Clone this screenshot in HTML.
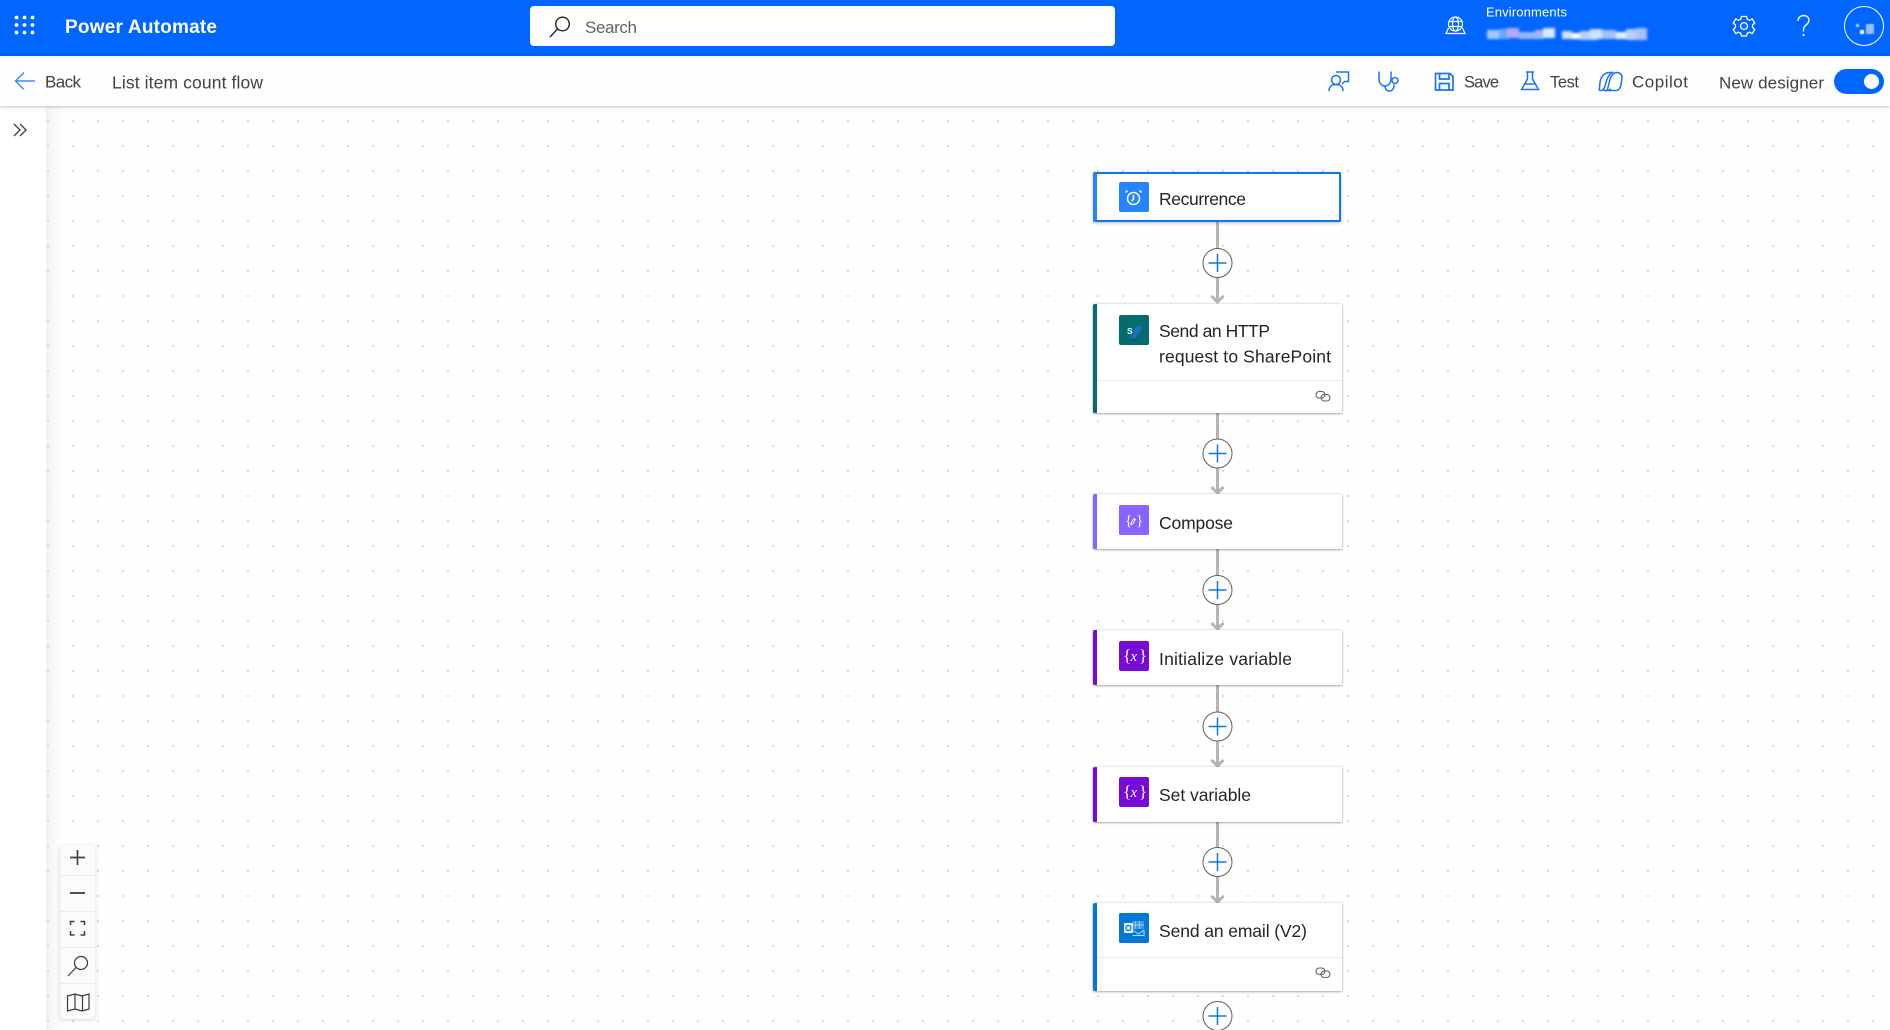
<!DOCTYPE html>
<html lang="en">
<head>
<meta charset="utf-8">
<title>List item count flow | Power Automate</title>
<style>
html,body{margin:0;padding:0;width:1890px;height:1030px;overflow:hidden;background:#fff}
body{position:relative;font-family:"Liberation Sans",sans-serif}
.abs{position:absolute}
#canvas{left:46px;top:106px;width:1844px;height:924px;background-color:#fefefe;
 background-image:radial-gradient(circle at 1px 1px,#c4c4c4 .7px,transparent 1px),linear-gradient(90deg,#f1f1f1,#fafafa 10px,#fefefe 18px);
 background-size:25px 25px,100% 100%;background-position:1px 14px,0 0;background-repeat:repeat,no-repeat}
#panel{left:0;top:106px;width:46px;height:924px;background:#fff}
#top{left:0;top:0;width:1890px;height:56px;background:#0066ff}
#search{left:530px;top:6px;width:585px;height:40px;background:#fff;border-radius:4px}
#bar{left:0;top:56px;width:1890px;height:50px;background:#fefefe;box-shadow:0 1px 3px rgba(0,0,0,.25)}
.card{position:absolute;left:1093px;width:249px;background:#fff;box-sizing:border-box;border-left:4px solid;border-radius:2px 1px 1px 2px;box-shadow:0 0 2px rgba(0,0,0,.2),0 1px 2px rgba(0,0,0,.28)}
.card i{position:absolute;left:0;right:0;height:1px;background:#ebebeb}
#rec{left:1093px;top:172px;width:248px;height:50px;box-sizing:border-box;border:2px solid #0f78e8;border-left:4px solid #2684ff;box-shadow:0 1px 3px rgba(0,0,0,.25);background:#fff;position:absolute;border-radius:2px}
.ic{position:absolute;left:1119px;width:30px;height:30px;border-radius:2px}
#zoom{left:60px;top:845px;width:35px;height:174px;background:#fbfbfb;border-radius:3px;box-shadow:0 1px 4px rgba(0,0,0,.16)}
#zoom i{position:absolute;left:0;right:0;height:1px;background:#ececec}
#toggle{left:1834px;top:69px;width:50px;height:25px;border-radius:13px;background:#0066ff}
#toggle b{position:absolute;left:30px;top:5px;width:15px;height:15px;border-radius:50%;background:#fff}
#blur{left:1487px;top:26px;width:160px;height:16px;filter:blur(1.4px)}
#blur span{position:absolute}
#ava{left:1856px;top:22px;width:18px;height:12px;filter:blur(.5px)}
#ava span{position:absolute;background:#b9d2ff}
svg#o{position:absolute;left:0;top:0;width:1890px;height:1030px}
text{font-family:"Liberation Sans",sans-serif}
.c{font-size:17.5px;fill:#242424}
.b{font-size:17px;fill:#424242}
.s{font-size:16.5px;fill:#424242}
</style>
</head>
<body>
<div id="canvas" class="abs"></div>
<div id="panel" class="abs"></div>
<div id="top" class="abs"></div>
<div id="search" class="abs"></div>
<div id="bar" class="abs"></div>

<div id="blur" class="abs">
<span style="left:0;top:4px;width:12px;height:9px;background:#a3c6ff"></span>
<span style="left:12px;top:3px;width:10px;height:10px;background:#6fa4ff"></span>
<span style="left:20px;top:2px;width:12px;height:10px;background:#b5a8f2"></span>
<span style="left:32px;top:6px;width:16px;height:7px;background:#8fb8ff"></span>
<span style="left:48px;top:4px;width:8px;height:9px;background:#a9b4f8"></span>
<span style="left:56px;top:2px;width:12px;height:10px;background:#dbe8ff"></span>
<span style="left:75px;top:5px;width:10px;height:8px;background:#cfe0ff"></span>
<span style="left:85px;top:7px;width:8px;height:6px;background:#ffffff"></span>
<span style="left:93px;top:5px;width:18px;height:9px;background:#b6d0ff"></span>
<span style="left:103px;top:3px;width:12px;height:10px;background:#cfe0ff"></span>
<span style="left:115px;top:4px;width:14px;height:9px;background:#9fc2ff"></span>
<span style="left:129px;top:6px;width:10px;height:7px;background:#e6efff"></span>
<span style="left:139px;top:3px;width:10px;height:11px;background:#b8cffd"></span>
<span style="left:149px;top:2px;width:11px;height:12px;background:#a8bffa"></span>
</div>
<div id="ava" class="abs">
<span style="left:0;top:2px;width:3px;height:3px"></span>
<span style="left:4px;top:8px;width:4px;height:4px;background:#fff"></span>
<span style="left:10px;top:2px;width:8px;height:10px;background:#99bcff"></span>
</div>
<div id="toggle" class="abs"><b></b></div>

<svg class="abs" style="left:0;top:0" width="1890" height="1030">
 <g stroke="#b4b4b4" stroke-width="3" fill="none">
  <path d="M1217.500 222V302M1211.500 296l6 6 6-6"/>
  <path d="M1217.500 413V493M1211.500 487l6 6 6-6"/>
  <path d="M1217.500 549V629M1211.500 623l6 6 6-6"/>
  <path d="M1217.500 685V766M1211.500 760l6 6 6-6"/>
  <path d="M1217.500 821V902M1211.500 896l6 6 6-6"/>
 </g>
</svg>

<div id="rec"></div>
<div class="card" style="top:304px;height:109px;border-left-color:#036c70"><i style="top:76px"></i></div>
<div class="card" style="top:494px;height:55px;border-left-color:#8764ff"></div>
<div class="card" style="top:630px;height:55px;border-left-color:#770bd6"></div>
<div class="card" style="top:767px;height:55px;border-left-color:#770bd6"></div>
<div class="card" style="top:903px;height:88px;border-left-color:#0078d4"><i style="top:54px"></i></div>

<div class="ic" style="top:182px;background:#2684ff"></div>
<div class="ic" style="top:315px;background:#036c70"></div>
<div class="ic" style="top:505px;background:#8764ff"></div>
<div class="ic" style="top:641px;background:#770bd6"></div>
<div class="ic" style="top:777px;background:#770bd6"></div>
<div class="ic" style="top:913px;background:#0078d4"></div>

<div id="zoom" class="abs"><i style="top:30px"></i><i style="top:66px"></i><i style="top:102px"></i><i style="top:138px"></i></div>

<svg id="o" viewBox="0 0 1890 1030">
 <g fill="#fff">
  <circle cx="16.5" cy="17.5" r="1.9"/><circle cx="24.5" cy="17.5" r="1.9"/><circle cx="32.5" cy="17.5" r="1.9"/>
  <circle cx="16.5" cy="25" r="1.9"/><circle cx="24.5" cy="25" r="1.9"/><circle cx="32.5" cy="25" r="1.9"/>
  <circle cx="16.5" cy="32.5" r="1.9"/><circle cx="24.5" cy="32.5" r="1.9"/><circle cx="32.5" cy="32.5" r="1.9"/>
 </g>
 <text x="65" y="33" font-size="19" font-weight="700" fill="#fff" textLength="152">Power Automate</text>
 <g fill="none" stroke="#242424" stroke-width="1.4"><circle cx="562.5" cy="24" r="6.8"/><path d="M557.5 29L550 37"/></g>
 <text x="585" y="33" font-size="17" fill="#616161" textLength="52">Search</text>

 <g fill="none" stroke="#fff" stroke-width="1.2">
  <circle cx="1455.500" cy="24" r="7"/><ellipse cx="1455.500" cy="24" rx="3" ry="7"/><path d="M1449 21.500h13M1449 26.500h13M1448.500 28l-2.500 5.500h19l-2.500-5.500"/>
 </g>
 <text x="1486" y="16.500" font-size="13" fill="#fff" textLength="81">Environments</text>
 <g fill="none" stroke="#fff" stroke-width="1.3">
  <circle cx="1744" cy="26" r="3.400"/>
  <path d="M1741.500 16.500h5l.8 2.800 2.300 1 2.600-1.400 2.500 4.100-2.100 2 0 2.500 2.100 2-2.500 4.100-2.600-1.400-2.300 1-.8 2.800h-5l-.8-2.800-2.300-1-2.600 1.400-2.500-4.100 2.100-2 0-2.500-2.100-2 2.500-4.100 2.600 1.400 2.300-1z"/>
 </g>
 <g fill="none" stroke="#fff" stroke-width="1.4"><path d="M1798 21c0-7 11-7.500 11-.5 0 4-5.500 4.500-5.500 9v2"/></g>
 <circle cx="1803.500" cy="35" r="1.100" fill="#fff"/>
 <circle cx="1864" cy="26" r="19.500" fill="none" stroke="#fff" stroke-width="1"/>

 <path d="M35 81H16M24 72.500l-8.500 8.500 8.500 8.500" fill="none" stroke="#3f8cf5" stroke-width="1.500"/>
 <text x="45" y="87.500" class="b" textLength="36">Back</text>
 <text x="112" y="88.500" font-size="17.500" fill="#424242" textLength="151">List item count flow</text>
 <g fill="none" stroke="#1a73f0" stroke-width="1.500">
  <circle cx="1336" cy="80" r="4.500"/>
  <path d="M1329 91c0-4.500 3-6.500 7-6.500s7 2 7 6.500M1336 72h12.500v9.500h-4l-2.500 2.500"/>
  <path d="M1379 71.500v7c0 5 3 7.500 6 7.500s6-2.500 6-7.500v-7M1385 86c0 3.500 2 5 4.500 5s4.500-2 4.500-5.500v-1"/>
  <circle cx="1395" cy="80.500" r="3"/>
  <path d="M1435.500 73.500h14.500l3 3v13.500h-17.500zM1439.500 73.500v5.500h9.500v-5.500M1439.500 90v-6.500h9.500v6.500" stroke-width="1.700"/>
  <path d="M1526 72h8M1527.500 72v7l-6 10.500h17l-6-10.500v-7M1524.500 84h10"/>
  <path d="M1600 82c1-6 5-9.500 9.500-9.500h2.500c-3 2-5 6-6 10-1 4-2 8-5.500 8-1.500 0-1.500-1-1-2.500zM1607 90.500h9c3 0 4-2 5-5.500l1-7c.5-3-2-5.500-5-5.500-4 0-6 4-7 7l-2 8c-.5 2-1 3-2 3.500zM1603 90c3 1 6 .5 8-1"/>
 </g>
 <text x="1464" y="87.500" class="s" textLength="35">Save</text>
 <text x="1550" y="87.500" class="s" textLength="29">Test</text>
 <text x="1632" y="87.500" class="b" textLength="56">Copilot</text>
 <text x="1719" y="88.500" class="b" textLength="105">New designer</text>

 <path d="M14 124l6 6-6 6M20 124l6 6-6 6" fill="none" stroke="#424242" stroke-width="1.400"/>

 <g fill="#fff" stroke="#605e5c" stroke-width="1">
  <circle cx="1217.500" cy="263" r="14.500"/><circle cx="1217.500" cy="453.500" r="14.500"/><circle cx="1217.500" cy="590" r="14.500"/><circle cx="1217.500" cy="726.500" r="14.500"/><circle cx="1217.500" cy="862" r="14.500"/><circle cx="1217.500" cy="1016" r="14.500"/>
 </g>
 <g stroke="#0f78e0" stroke-width="1.500">
  <path d="M1208.500 263h18M1217.500 254v18"/><path d="M1208.500 453.500h18M1217.500 444.500v18"/><path d="M1208.500 590h18M1217.500 581v18"/><path d="M1208.500 726.500h18M1217.500 717.500v18"/><path d="M1208.500 862h18M1217.500 853v18"/><path d="M1208.500 1016h18M1217.500 1007v18"/>
 </g>

 <text x="1159" y="205" class="c" textLength="87">Recurrence</text>
 <text x="1159" y="337" class="c" textLength="111">Send an HTTP</text>
 <text x="1159" y="362.500" class="c" textLength="172">request to SharePoint</text>
 <text x="1159" y="529" class="c" textLength="74">Compose</text>
 <text x="1159" y="665" class="c" textLength="133">Initialize variable</text>
 <text x="1159" y="801" class="c" textLength="92">Set variable</text>
 <text x="1159" y="937" class="c" textLength="148">Send an email (V2)</text>

 <g fill="none" stroke="#fff" stroke-width="1.500">
  <circle cx="1133.500" cy="198.500" r="6"/><path d="M1133.500 195v4l-1.800 2.200M1127.500 190.500l-2 2M1139.500 190.500l2 2"/>
 </g>
 <text x="1127" y="334" font-size="8.500" font-weight="700" fill="#fff">S</text>
 <path d="M1137 326c3-1.500 5 1 4.500 3.500-.5 3-3 3.500-4.500 5.500-1 1.500-1.500 3.500-3.500 3.500s-2.500-2-1.500-3.500l2.500-2c.5-2.500 0-6 2.500-7z" fill="#1f6fc0"/>
 <path d="M1131 340h7" stroke="#0b3a52" stroke-width="1"/>
 <text x="1125" y="525" font-size="15" fill="#fff" style="font-family:'Liberation Serif',serif">{</text>
 <text x="1136" y="525" font-size="15" fill="#fff" style="font-family:'Liberation Serif',serif">}</text>
 <path d="M1131 523l3-4.500 1.500 1-3 4.500-1.500.5z" fill="none" stroke="#fff" stroke-width=".9"/>
 <g fill="#fff" font-size="17">
  <text x="1123" y="661" style="font-family:'Liberation Serif',serif">{</text><text x="1130.500" y="661" style="font-family:'Liberation Serif',serif;font-style:italic" font-size="15">x</text><text x="1139" y="661" style="font-family:'Liberation Serif',serif">}</text>
  <text x="1123" y="797" style="font-family:'Liberation Serif',serif">{</text><text x="1130.500" y="797" style="font-family:'Liberation Serif',serif;font-style:italic" font-size="15">x</text><text x="1139" y="797" style="font-family:'Liberation Serif',serif">}</text>
 </g>
 <rect x="1132" y="921" width="12" height="8" fill="#3d9be6"/>
 <path d="M1135.500 921v8M1139.500 921v8M1132 925h12" stroke="#a9d3f5" stroke-width=".8"/>
 <path d="M1132.500 930l6 4 5.500-4M1132.500 935.500h11.500V930" fill="none" stroke="#bcdcf7" stroke-width="1"/>
 <rect x="1124" y="923" width="9" height="10" fill="#e8f3fc"/>
 <circle cx="1128.500" cy="928" r="2.500" fill="none" stroke="#0078d4" stroke-width="1.300"/>

 <g fill="none" stroke="#616161" stroke-width="1.100">
  <rect x="1316" y="391.500" width="9" height="6.500" rx="3.250"/><rect x="1321" y="394.500" width="9" height="6.500" rx="3.250"/>
  <rect x="1316" y="968" width="9" height="6.500" rx="3.250"/><rect x="1321" y="971" width="9" height="6.500" rx="3.250"/>
 </g>

 <g fill="none" stroke="#424242" stroke-width="1.700">
  <path d="M70 857.500h15M77.500 850v15"/>
  <path d="M70 893h15" stroke="#333"/>
  <path d="M70.500 925v-3.500h4M80.500 921.500h4v3.500M84.500 931v4h-4M74.500 935h-4v-4" stroke-width="1.500"/>
 </g>
 <g fill="none" stroke="#3a3a3a" stroke-width="1.200">
  <circle cx="81" cy="963" r="6.500"/><path d="M76 967.500l-8 8.500"/>
  <path d="M67.500 996l7.500-2 7 2 7-2v15l-7 2-7-2-7.500 2zM75 994v15M82.500 996v15"/>
 </g>
</svg>
</body>
</html>
